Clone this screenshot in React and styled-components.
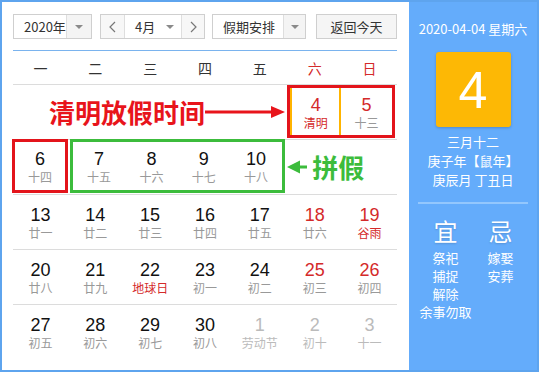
import React from 'react';
import styled, { createGlobalStyle } from 'styled-components';

const CJK = `"Noto Sans CJK SC", "Liberation Sans", sans-serif`;
const NUM = `"Liberation Sans", Arial, sans-serif`;
const RED = '#d42a2a';

const Global = createGlobalStyle`
  html, body { margin: 0; padding: 0; background: #fff; }
  body { font-family: ${CJK}; }
`;

const Frame = styled.div`
  box-sizing: border-box;
  width: 539px;
  height: 372px;
  border: 2px solid #5ea4ee;
  display: flex;
  background: #fff;
  overflow: hidden;
`;

const Main = styled.div`
  width: 407px;
  box-sizing: border-box;
  padding: 12px 12px 0 11px;
  display: flex;
  flex-direction: column;
`;

const Toolbar = styled.div`
  display: flex;
  height: 25px;
  padding-bottom: 11px;
  border-bottom: 1px solid #7ab3ee;
`;

const Select = styled.div`
  display: flex;
  box-sizing: border-box;
  width: ${(p) => p.$w}px;
  margin-right: ${(p) => p.$mr || 0}px;
  border: 1px solid #cfcfcf;
  background: #fff;
  font-size: 13px;
  color: #333;
`;

const SelLabel = styled.div`
  flex: 1;
  display: flex;
  align-items: center;
  padding-left: ${(p) => p.$pl}px;
  line-height: 23px;
`;

const Caret = styled.div`
  width: ${(p) => p.$w}px;
  display: flex;
  align-items: center;
  justify-content: center;
  border-left: ${(p) => (p.$plain ? 'none' : '1px solid #dedede')};
  background: ${(p) => (p.$plain ? 'transparent' : '#f4f4f4')};
  &::after {
    content: '';
    border-left: 4px solid transparent;
    border-right: 4px solid transparent;
    border-top: 4px solid #8a8a8a;
  }
`;

const Step = styled.div`
  width: ${(p) => p.$w}px;
  display: flex;
  align-items: center;
  justify-content: center;
  background: #f7f7f7;
  border-${(p) => p.$side}: 1px solid #dedede;
`;

const Button = styled.div`
  margin-left: auto;
  width: 81px;
  box-sizing: border-box;
  border: 1px solid #cfcfcf;
  background: #f5f5f5;
  display: flex;
  align-items: center;
  justify-content: center;
  font-size: 13px;
  color: #333;
`;

const Weekdays = styled.div`
  display: grid;
  grid-template-columns: repeat(7, 1fr);
  height: 33px;
  align-items: center;
  border-bottom: 1px solid #dcdcdc;
`;

const Wd = styled.div`
  text-align: center;
  font-size: 14px;
  line-height: 18px;
  color: ${(p) => (p.$red ? RED : '#333')};
`;

const Week = styled.div`
  display: grid;
  grid-template-columns: repeat(7, 1fr);
  height: 54px;
  border-bottom: ${(p) => (p.$last ? 'none' : '1px solid #dcdcdc')};
`;

const Mark = styled.div`
  grid-column: span ${(p) => p.$span};
  display: grid;
  grid-template-columns: repeat(${(p) => p.$span}, 1fr);
  box-sizing: border-box;
  border: 3px solid ${(p) => p.$color};
  margin: ${(p) => p.$m || '0 0 1px 0'};
`;

const Cell = styled.div`
  display: flex;
  flex-direction: column;
  align-items: center;
  box-sizing: border-box;
  padding-top: ${(p) => p.$pt ?? 10}px;
  border-left: ${(p) => (p.$today ? '2px solid #ffb400' : 'none')};
  border-right: ${(p) => (p.$today ? '2px solid #ffb400' : 'none')};
`;

const Num = styled.div`
  font-family: ${NUM};
  font-size: 18px;
  line-height: 20px;
  color: ${(p) => p.$c};
`;

const Lunar = styled.div`
  font-size: 12px;
  line-height: 16px;
  color: ${(p) => p.$c};
  white-space: nowrap;
`;

const Note = styled.div`
  grid-column: span ${(p) => p.$span};
  display: flex;
  align-items: center;
  gap: ${(p) => p.$gap || 0}px;
  padding-left: ${(p) => p.$pl || 0}px;
  font-size: 26px;
  line-height: 30px;
  font-weight: 700;
  color: ${(p) => p.$c};
  white-space: nowrap;
`;

const Side = styled.div`
  flex: 1;
  background: #64acfb;
  display: flex;
  flex-direction: column;
  align-items: center;
  padding-top: 18px;
  color: #fff;
`;

const DateLine = styled.div`
  font-size: 13px;
  line-height: 18px;
  white-space: nowrap;
`;

const TodayBox = styled.div`
  width: 75px;
  height: 75px;
  margin-top: 14px;
  background: #fdb805;
  border-radius: 3px;
  box-shadow: 0 1px 3px rgba(0, 0, 0, 0.2);
  display: flex;
  align-items: center;
  justify-content: center;
  font-family: ${NUM};
  font-size: 52px;
  line-height: 1;
`;

const Info = styled.div`
  margin-top: 5px;
  font-size: 13px;
  line-height: 19px;
  text-align: center;
  white-space: nowrap;
`;

const Rule = styled.div`
  width: 110px;
  height: 2px;
  background: #93c7fd;
  margin-top: 13px;
`;

const Columns = styled.div`
  display: grid;
  grid-template-columns: 55px 55px;
  margin-top: 14px;
`;

const Col = styled.div`
  display: flex;
  flex-direction: column;
  align-items: center;
`;

const Big = styled.div`
  font-size: 24px;
  line-height: 26px;
  height: 26px;
  text-shadow: 0 1px 2px rgba(0, 0, 0, 0.15);
  margin-bottom: 5px;
`;

const Item = styled.div`
  font-size: 13px;
  line-height: 18px;
  white-space: nowrap;
`;

const Chevron = ({ dir }) => (
  <svg width="7" height="12" viewBox="0 0 7 12">
    <polyline
      points={dir === 'left' ? '6,1 1,6 6,11' : '1,1 6,6 1,11'}
      fill="none"
      stroke="#777"
      strokeWidth="1.2"
    />
  </svg>
);

const RedArrow = () => (
  <svg width="80" height="14" viewBox="0 0 80 14">
    <rect x="0" y="5.5" width="68" height="3" fill="#e8141b" />
    <polygon points="66,1 80,7 66,13" fill="#e8141b" />
  </svg>
);

const GreenArrow = () => (
  <svg width="20" height="14" viewBox="0 0 20 14">
    <polygon points="0,7 13,0.5 13,13.5" fill="#3cbc3c" />
    <rect x="12" y="5.5" width="8" height="3" fill="#3cbc3c" />
  </svg>
);

const GRAY = '#999';
const BLACK = '#111';
const FADE = '#bbb';

const Day = ({ d, pt, today }) => (
  <Cell $pt={pt} $today={today}>
    <Num $c={d.nc || BLACK}>{d.n}</Num>
    <Lunar $c={d.lc || GRAY}>{d.l}</Lunar>
  </Cell>
);

const d = (n, l, nc, lc) => ({ n, l, nc, lc });

const week3 = [
  d(13, '廿一'), d(14, '廿二'), d(15, '廿三'), d(16, '廿四'), d(17, '廿五'),
  d(18, '廿六', RED), d(19, '谷雨', RED, RED),
];
const week4 = [
  d(20, '廿八'), d(21, '廿九'), d(22, '地球日', BLACK, RED), d(23, '初一'), d(24, '初二'),
  d(25, '初三', RED), d(26, '初四', RED),
];
const week5 = [
  d(27, '初五'), d(28, '初六'), d(29, '初七'), d(30, '初八'),
  d(1, '劳动节', FADE, FADE), d(2, '初十', FADE, FADE), d(3, '十一', FADE, FADE),
];
const green = [d(7, '十五'), d(8, '十六'), d(9, '十七'), d(10, '十八')];

export default function App() {
  return (
    <>
      <Global />
      <Frame>
        <Main>
          <Toolbar>
            <Select $w={79} $mr={8}>
              <SelLabel $pl={10}>2020年</SelLabel>
              <Caret $w={24} />
            </Select>
            <Select $w={105} $mr={7}>
              <Step $w={23} $side="right"><Chevron dir="left" /></Step>
              <SelLabel $pl={10}>4月</SelLabel>
              <Caret $w={22} $plain />
              <Step $w={22} $side="left"><Chevron dir="right" /></Step>
            </Select>
            <Select $w={94}>
              <SelLabel $pl={10}>假期安排</SelLabel>
              <Caret $w={21} />
            </Select>
            <Button>返回今天</Button>
          </Toolbar>

          <Weekdays>
            {['一', '二', '三', '四', '五'].map((w) => (
              <Wd key={w}>{w}</Wd>
            ))}
            <Wd $red>六</Wd>
            <Wd $red>日</Wd>
          </Weekdays>

          <Week>
            <Note $span={5} $pl={36} $c="#e8141b">
              清明放假时间
              <RedArrow />
            </Note>
            <Mark $span={2} $color="#e3141b" $m="0 2px 1px 0">
              <Day d={d(4, '清明', RED, RED)} pt={7} today />
              <Day d={d(5, '十三', RED)} pt={7} />
            </Mark>
          </Week>

          <Week>
            <Mark $span={1} $color="#e3141b" $m="-1px 0 1px -1px">
              <Day d={d(6, '十四')} pt={7} />
            </Mark>
            <Mark $span={4} $color="#3cbc3c" $m="-1px 2px 1px 2px">
              {green.map((g) => (
                <Day key={g.n} d={g} pt={7} />
              ))}
            </Mark>
            <Note $span={2} $gap={5} $c="#3cbc3c">
              <GreenArrow />
              拼假
            </Note>
          </Week>

          {[week3, week4, week5].map((wk, i) => (
            <Week key={i} $last={i === 2}>
              {wk.map((x) => (
                <Day key={x.n + x.l} d={x} />
              ))}
            </Week>
          ))}
        </Main>

        <Side>
          <DateLine>2020-04-04 星期六</DateLine>
          <TodayBox>4</TodayBox>
          <Info>
            三月十二
            <br />
            庚子年【鼠年】
            <br />
            庚辰月 丁丑日
          </Info>
          <Rule />
          <Columns>
            <Col>
              <Big>宜</Big>
              <Item>祭祀</Item>
              <Item>捕捉</Item>
              <Item>解除</Item>
              <Item>余事勿取</Item>
            </Col>
            <Col>
              <Big>忌</Big>
              <Item>嫁娶</Item>
              <Item>安葬</Item>
            </Col>
          </Columns>
        </Side>
      </Frame>
    </>
  );
}
